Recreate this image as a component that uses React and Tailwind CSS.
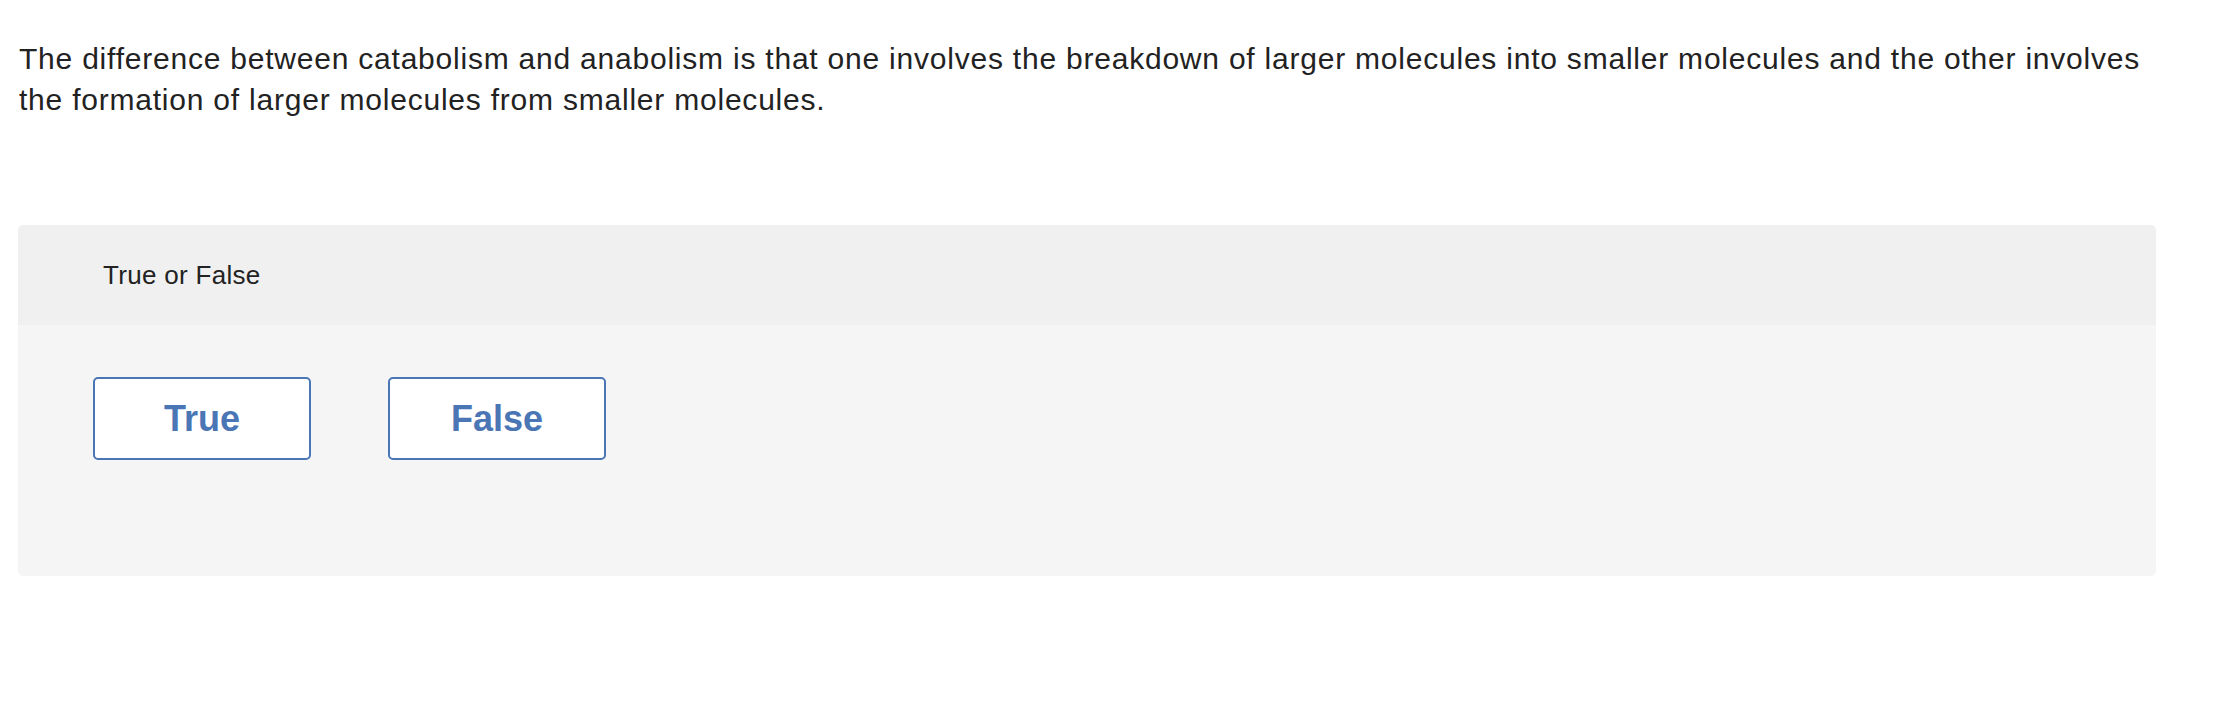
import React from 'react';

const question =
  'The difference between catabolism and anabolism is that one involves the breakdown of larger molecules into smaller molecules and the other involves the formation of larger molecules from smaller molecules.';

export default function App() {
  return (
    <div className="min-h-screen bg-white font-['Liberation_Sans',Arial,sans-serif] text-[#222222]">
      <div className="pl-[19px] pr-[60px] pt-[38px]">
        {/* prompt */}
        <p className="text-[30px] leading-[41px] tracking-[0.78px] max-w-[2138px]">{question}</p>

        {/* answer panel */}
        <div className="mt-[105px] w-[2138px] rounded-[5px] overflow-hidden -ml-px">
          <div className="h-[100px] bg-[#f0f0f0] flex items-center pl-[85px]">
            <span className="text-[26px] tracking-[0.3px]">True or False</span>
          </div>
          <div className="h-[251px] bg-[#f5f5f5] pl-[75px] pt-[52px]">
            <div className="flex gap-[77px]">
              {['True', 'False'].map(label => (
                <button
                  key={label}
                  className="w-[218px] h-[83px] bg-white border-2 border-[#4a76b5] rounded-[5px] text-[36px] font-bold text-[#4a76b5] flex items-center justify-center"
                >
                  {label}
                </button>
              ))}
            </div>
          </div>
        </div>
      </div>
    </div>
  );
}
